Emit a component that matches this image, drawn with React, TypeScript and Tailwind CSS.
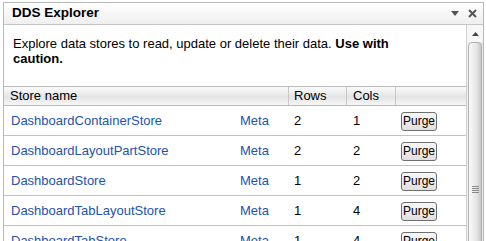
import React from "react";

const rows = [
  { name: "DashboardContainerStore", r: "2", c: "1" },
  { name: "DashboardLayoutPartStore", r: "2", c: "2" },
  { name: "DashboardStore", r: "1", c: "2" },
  { name: "DashboardTabLayoutStore", r: "1", c: "4" },
  { name: "DashboardTabStore", r: "1", c: "4" },
];

function PurgeButton() {
  return (
    <button className="h-[19px] w-[36px] rounded-[3px] border border-[#6f6f6f] bg-[linear-gradient(#f7f7f7,#e0e0e0)] text-[12px] leading-[17px] text-black">
      Purge
    </button>
  );
}

export default function App() {
  return (
    <div
      className="h-[241px] w-[486px] overflow-hidden bg-white pl-[3px] pr-[2px] pt-[2px]"
      style={{ fontFamily: '"Liberation Sans", Arial, sans-serif' }}
    >
      <div className="flex h-[260px] flex-col border border-[#b8b8b8]">
        <div className="flex h-[22px] shrink-0 items-center border-b border-[#c4c4c4] bg-[linear-gradient(#ffffff,#efefef)] pl-[8px] pr-[6px]">
          <span className="text-[13.5px] font-bold text-black">DDS Explorer</span>
          <div className="ml-auto flex items-center gap-[9px]">
            <svg width="8" height="5" viewBox="0 0 8 5">
              <path d="M0 0 H8 L4 5 Z" fill="#555" />
            </svg>
            <svg width="9" height="9" viewBox="0 0 9 9">
              <path d="M1 1 L8 8 M8 1 L1 8" stroke="#555" strokeWidth="2" />
            </svg>
          </div>
        </div>
        <div className="flex flex-1">
          <div className="flex-1">
            <p className="w-[420px] pl-[9px] pt-[11px] text-[13px] leading-[15px] text-black">
              Explore data stores to read, update or delete their data. <b>Use with caution.</b>
            </p>
            <div className="mt-[20px] text-[13px]">
              <div className="flex h-[20px] border-y border-[#b9b9b9] bg-[linear-gradient(#fbfbfb,#e4e4e4_55%,#f6f6f6)] leading-[18px] text-black">
                <div className="w-[284px] pl-[6px]">Store name</div>
                <div className="w-[58px] border-l border-[#c8c8c8] pl-[5px]">Rows</div>
                <div className="w-[49px] border-l border-[#c8c8c8] pl-[6px]">Cols</div>
                <div className="flex-1 border-l border-[#c8c8c8]" />
              </div>
              {rows.map((row) => (
                <div key={row.name} className="flex h-[30px] items-center border-b border-[#c2c2c2]">
                  <div className="w-[236px] pl-[7px] text-[#2352b0]">{row.name}</div>
                  <div className="w-[48px] text-[#2352b0]">Meta</div>
                  <div className="w-[58px] pl-[6px] text-black">{row.r}</div>
                  <div className="w-[49px] pl-[7px] text-black">{row.c}</div>
                  <div className="flex-1 pl-[6px]">
                    <PurgeButton />
                  </div>
                </div>
              ))}
            </div>
          </div>
          <div className="relative w-[17px] shrink-0 border-l border-[#cfcfcf] bg-[linear-gradient(90deg,#f2f2f2,#e6e6e6)]">
            <div className="flex h-[17px] items-center justify-center bg-[#f7f7f7]">
              <svg width="7" height="4" viewBox="0 0 7 4">
                <path d="M0 4 L3.5 0 L7 4 Z" fill="#444" />
              </svg>
            </div>
            <div className="mx-[1px] h-[240px] rounded-t-[4px] border border-[#b0b0b0] bg-[linear-gradient(90deg,#fafafa,#e6e6e6_60%,#c9c9c9)]">
              <div className="mt-[143px] flex flex-col items-center gap-[1px]">
                <div className="h-[1px] w-[7px] bg-[#8a8a8a]" />
                <div className="h-[1px] w-[7px] bg-[#8a8a8a]" />
                <div className="h-[1px] w-[7px] bg-[#8a8a8a]" />
                <div className="h-[1px] w-[7px] bg-[#8a8a8a]" />
              </div>
            </div>
          </div>
        </div>
      </div>
    </div>
  );
}
